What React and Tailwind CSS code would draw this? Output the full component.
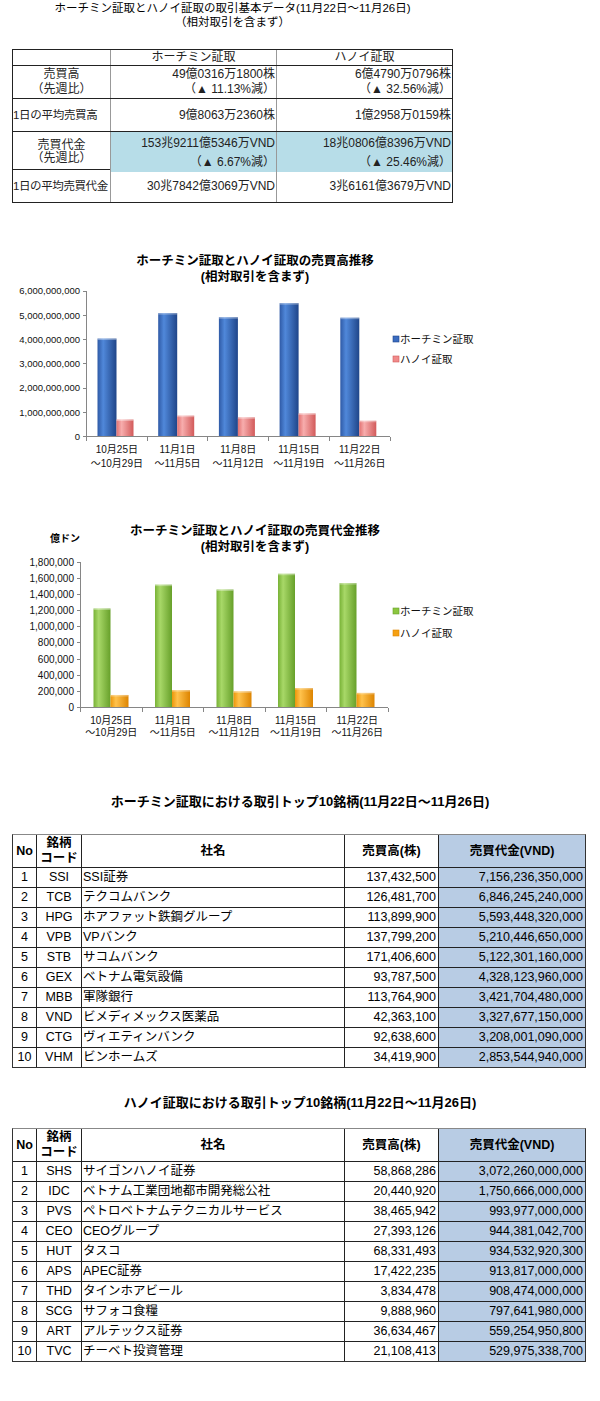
const weeks = [
  ["10月25日", "〜10月29日"],
  ["11月1日", "〜11月5日"],
  ["11月8日", "〜11月12日"],
  ["11月15日", "〜11月19日"],
  ["11月22日", "〜11月26日"],
];

const hcmTop = [
  ["1", "SSI", "SSI証券", "137,432,500", "7,156,236,350,000"],
  ["2", "TCB", "テクコムバンク", "126,481,700", "6,846,245,240,000"],
  ["3", "HPG", "ホアファット鉄鋼グループ", "113,899,900", "5,593,448,320,000"],
  ["4", "VPB", "VPバンク", "137,799,200", "5,210,446,650,000"],
  ["5", "STB", "サコムバンク", "171,406,600", "5,122,301,160,000"],
  ["6", "GEX", "ベトナム電気設備", "93,787,500", "4,328,123,960,000"],
  ["7", "MBB", "軍隊銀行", "113,764,900", "3,421,704,480,000"],
  ["8", "VND", "ビメディメックス医薬品", "42,363,100", "3,327,677,150,000"],
  ["9", "CTG", "ヴィエティンバンク", "92,638,600", "3,208,001,090,000"],
  ["10", "VHM", "ビンホームズ", "34,419,900", "2,853,544,940,000"],
];

const hnTop = [
  ["1", "SHS", "サイゴンハノイ証券", "58,868,286", "3,072,260,000,000"],
  ["2", "IDC", "ベトナム工業団地都市開発総公社", "20,440,920", "1,750,666,000,000"],
  ["3", "PVS", "ペトロベトナムテクニカルサービス", "38,465,942", "993,977,000,000"],
  ["4", "CEO", "CEOグループ", "27,393,126", "944,381,042,700"],
  ["5", "HUT", "タスコ", "68,331,493", "934,532,920,300"],
  ["6", "APS", "APEC証券", "17,422,235", "913,817,000,000"],
  ["7", "THD", "タインホアビール", "3,834,478", "908,474,000,000"],
  ["8", "SCG", "サフォコ食糧", "9,888,960", "797,641,980,000"],
  ["9", "ART", "アルテックス証券", "36,634,467", "559,254,950,800"],
  ["10", "TVC", "チーベト投資管理", "21,108,413", "529,975,338,700"],
];

const volChart = {
  id: "vol",
  originY: 284,
  axisX: 86.5,
  axisTop: 290,
  axisBottom: 435.5,
  axisRight: 390,
  max: 6e9,
  step: 1e9,
  labelX: 80,
  fontSize: 9.5,
  offset: 11,
  widths: [19, 17],
  data: [
    [4.04e9, 5.09e9, 4.92e9, 5.5e9, 4.9e9],
    [0.7e9, 0.86e9, 0.79e9, 0.95e9, 0.65e9],
  ],
  colors: [
    ["#2f5aa6", "#5088da", "#1f4589", "#3a6cc0"],
    ["#e27171", "#f7adad", "#d25a5a", "#f08a8a"],
  ],
  legendY: [338, 358],
  xLabelY: [448, 462],
};

const valChart = {
  id: "val",
  originY: 554,
  axisX: 80.5,
  axisTop: 561,
  axisBottom: 706.5,
  axisRight: 388,
  max: 1.8e6,
  step: 2e5,
  labelX: 74,
  fontSize: 10,
  offset: 13,
  widths: [17, 18],
  data: [
    [1225000, 1520000, 1460000, 1655000, 1539211],
    [155000, 215000, 200000, 240000, 180806],
  ],
  colors: [
    ["#78b236", "#a8d868", "#67a02a", "#8cc63f"],
    ["#ec960a", "#ffc24c", "#dd8400", "#f5a012"],
  ],
  legendY: [610, 632],
  xLabelY: [719, 731],
};

const legendNames = ["ホーチミン証取", "ハノイ証取"];

function BarChart({ c }) {
  const groupW = (c.axisRight - c.axisX) / 5;
  const y = (v) => c.axisBottom - (v / c.max) * (c.axisBottom - c.axisTop);
  const ticks = [];
  for (let v = 0; v <= c.max + 1; v += c.step) ticks.push(v);

  return (
    <svg width="480" height="190" viewBox={`0 ${c.originY} 480 190`} className="block">
      <defs>
        {c.colors.map((col, i) => (
          <linearGradient key={i} id={`${c.id}-g${i}`} x1="0" x2="1" y1="0" y2="0">
            <stop offset="0" stopColor={col[0]} />
            <stop offset="0.3" stopColor={col[1]} />
            <stop offset="1" stopColor={col[2]} />
          </linearGradient>
        ))}
      </defs>

      {c.data.map((series, s) =>
        series.map((v, i) => {
          const x = c.axisX + groupW * i + c.offset + (s === 1 ? c.widths[0] : 0);
          const top = y(v);
          return (
            <g key={`${s}-${i}`}>
              <rect x={x} y={top} width={c.widths[s]} height={c.axisBottom - top} fill={`url(#${c.id}-g${s})`} />
              <rect x={x} y={top} width={c.widths[s]} height="1.5" fill="#ffffff" opacity="0.35" />
            </g>
          );
        })
      )}

      <line x1={c.axisX} y1={c.axisTop} x2={c.axisX} y2={c.axisBottom} stroke="#868686" shapeRendering="crispEdges" />
      <line x1={c.axisX} y1={c.axisBottom} x2={c.axisRight} y2={c.axisBottom} stroke="#868686" shapeRendering="crispEdges" />

      {ticks.map((v) => (
        <g key={v}>
          <line x1={c.axisX - 4} x2={c.axisX} y1={y(v)} y2={y(v)} stroke="#868686" shapeRendering="crispEdges" />
          <text x={c.labelX} y={y(v) + c.fontSize * 0.36} textAnchor="end" fontSize={c.fontSize} fill="#111">
            {v.toLocaleString("en-US")}
          </text>
        </g>
      ))}

      {[0, 1, 2, 3, 4, 5].map((i) => (
        <line
          key={i}
          x1={c.axisX + groupW * i}
          x2={c.axisX + groupW * i}
          y1={c.axisBottom}
          y2={c.axisBottom + 4}
          stroke="#868686"
          shapeRendering="crispEdges"
        />
      ))}

      {weeks.map((w, i) => (
        <g key={i}>
          <text x={c.axisX + groupW * (i + 0.5)} y={c.xLabelY[0] + 3.6} textAnchor="middle" fontSize="10" fill="#111">
            {w[0]}
          </text>
          <text x={c.axisX + groupW * (i + 0.5)} y={c.xLabelY[1] + 3.6} textAnchor="middle" fontSize="10" fill="#111">
            {w[1]}
          </text>
        </g>
      ))}

      {legendNames.map((name, s) => (
        <g key={name}>
          <rect x="393" y={c.legendY[s] - 3} width="6" height="6" fill={c.colors[s][3]} stroke={c.colors[s][2]} strokeWidth="0.6" />
          <text x="400" y={c.legendY[s] + 3.6} fontSize="10.5" fill="#111">
            {name}
          </text>
        </g>
      ))}
    </svg>
  );
}

function TopTable({ rows }) {
  return (
    <div className="ml-[12px] w-[574px] border border-[#333] border-t-[#888] text-[12.5px] text-black">
      <div className="grid h-[32px] grid-cols-[23px_45px_263px_94px_147px] font-bold leading-[15px]">
        <div className="flex items-center justify-center">No</div>
        <div className="flex flex-col items-center justify-center border-l border-[#222]">
          <span>銘柄</span>
          <span>コード</span>
        </div>
        <div className="flex items-center justify-center border-l border-[#222]">社名</div>
        <div className="flex items-center justify-center border-l border-[#222]">売買高(株)</div>
        <div className="flex items-center justify-center border-l border-[#222] bg-[#b8cce4]">売買代金(VND)</div>
      </div>
      {rows.map((r) => (
        <div key={r[0]} className="grid h-[20px] grid-cols-[23px_45px_263px_94px_147px] border-t border-[#222] leading-[19px]">
          <div className="text-center">{r[0]}</div>
          <div className="border-l border-[#222] text-center">{r[1]}</div>
          <div className="border-l border-[#222] pl-[1px] whitespace-nowrap">{r[2]}</div>
          <div className="border-l border-[#222] pr-[2px] text-right">{r[3]}</div>
          <div className="border-l border-[#222] bg-[#b8cce4] pr-[2px] text-right">{r[4]}</div>
        </div>
      ))}
    </div>
  );
}

export default function App() {
  return (
    <div className="min-h-[1401px] w-[600px] bg-white font-['Liberation_Sans','Noto_Sans_CJK_JP',sans-serif] text-black">
      <div className="ml-[12px] w-[441px] pt-[1px] text-center text-[11.5px] leading-[14px]">
        <div>ホーチミン証取とハノイ証取の取引基本データ(11月22日〜11月26日)</div>
        <div>（相対取引を含まず）</div>
      </div>

      <div className="ml-[12px] mt-[20px] w-[441px] border border-[#222] text-[12px] text-[#222]">
        <div className="grid h-[15px] grid-cols-[97px_166px_176px] leading-[15px]">
          <div />
          <div className="border-l border-[#999] text-center">ホーチミン証取</div>
          <div className="border-l border-[#999] text-center">ハノイ証取</div>
        </div>
        <div className="grid h-[33px] grid-cols-[97px_166px_176px] border-t border-[#222] leading-[15px]">
          <div className="flex flex-col items-center justify-center">
            <span>売買高</span>
            <span>（先週比）</span>
          </div>
          <div className="flex flex-col items-end justify-center border-l border-[#999] pr-[1px]">
            <span>49億0316万1800株</span>
            <span>（▲ 11.13%減）</span>
          </div>
          <div className="flex flex-col items-end justify-center border-l border-[#999] pr-[1px]">
            <span>6億4790万0796株</span>
            <span>（▲ 32.56%減）</span>
          </div>
        </div>
        <div className="grid h-[33px] grid-cols-[97px_166px_176px] border-t border-[#222] leading-[32px]">
          <div className="whitespace-nowrap text-[11.5px] tracking-[-0.3px]">1日の平均売買高</div>
          <div className="border-l border-[#999] pr-[1px] text-right">9億8063万2360株</div>
          <div className="border-l border-[#999] pr-[1px] text-right">1億2958万0159株</div>
        </div>
        <div className="grid h-[38px] grid-cols-[97px_166px_176px] border-t border-[#222]">
          <div className="flex flex-col items-center justify-center leading-[13px]">
            <span>売買代金</span>
            <span>（先週比）</span>
          </div>
          <div className="flex flex-col items-end border-l border-[#999] bg-[#b7dde8] pr-[1px] pt-[2px] leading-[19px]">
            <span>153兆9211億5346万VND</span>
            <span>（▲ 6.67%減）</span>
          </div>
          <div className="flex flex-col items-end border-l border-[#999] bg-[#b7dde8] pr-[1px] pt-[2px] leading-[19px]">
            <span>18兆0806億8396万VND</span>
            <span>（▲ 25.46%減）</span>
          </div>
        </div>
        <div className="grid h-[33px] grid-cols-[97px_166px_176px] border-t border-[#222] leading-[32px]">
          <div className="whitespace-nowrap text-[11.5px] tracking-[-0.4px]">1日の平均売買代金</div>
          <div className="border-l border-[#999] pr-[1px] text-right">30兆7842億3069万VND</div>
          <div className="border-l border-[#999] pr-[1px] text-right">3兆6161億3679万VND</div>
        </div>
      </div>

      <div className="mt-[50px] w-[510px] text-center text-[12.5px] font-bold leading-[16px]">
        <div>ホーチミン証取とハノイ証取の売買高推移</div>
        <div>(相対取引を含まず)</div>
      </div>
      <BarChart c={volChart} />

      <div className="relative mt-[48px] w-[510px] text-center text-[12.5px] font-bold leading-[16px]">
        <span className="absolute left-[50px] top-[10px] text-[10px] leading-[12px]">億ドン</span>
        <div>ホーチミン証取とハノイ証取の売買代金推移</div>
        <div>(相対取引を含まず)</div>
      </div>
      <BarChart c={valChart} />

      <div className="mt-[48px] w-[600px] text-center text-[13px] font-bold leading-[17px]">
        ホーチミン証取における取引トップ10銘柄(11月22日〜11月26日)
      </div>
      <div className="mt-[24px]">
        <TopTable rows={hcmTop} />
      </div>

      <div className="mt-[26px] w-[600px] text-center text-[13px] font-bold leading-[17px]">
        ハノイ証取における取引トップ10銘柄(11月22日〜11月26日)
      </div>
      <div className="mt-[17px]">
        <TopTable rows={hnTop} />
      </div>
    </div>
  );
}
